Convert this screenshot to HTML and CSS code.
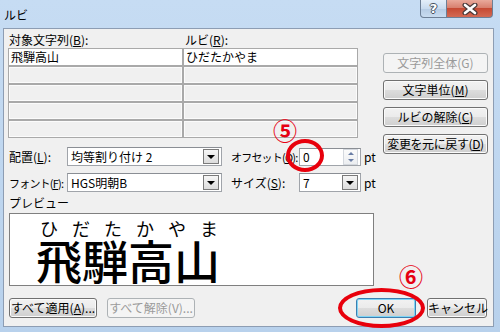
FILE: index.html
```html
<!DOCTYPE html>
<html lang="ja">

<head>
  <meta charset="UTF-8">
  <title>ルビ</title>
  <link rel="stylesheet" href="styles.css">
</head>

<body>
  <div class="rb_window">
    <div class="rb_titlebar">
      <span class="rb_title">ルビ</span>
      <div class="rb_caption">
        <div class="rb_cap_help">?</div>
        <div class="rb_cap_close">
          <svg width="16" height="12" viewBox="0 0 16 12">
            <path d="M3 2 L13 10 M13 2 L3 10" stroke="#4a3a3a" stroke-width="5" stroke-linecap="round" />
            <path d="M3 2 L13 10 M13 2 L3 10" stroke="#fff" stroke-width="2.6" stroke-linecap="round" />
          </svg>
        </div>
      </div>
    </div>

    <div class="rb_client">
      <div class="rb_main">
        <div class="rb_left">
          <div class="rb_grid_head">
            <span>対象文字列(<u>B</u>):</span>
            <span>ルビ(<u>R</u>):</span>
          </div>
          <div class="rb_grid">
            <div class="rb_cell rb_cell_on">飛騨高山</div>
            <div class="rb_cell rb_cell_on">ひだたかやま</div>
            <div class="rb_cell"></div>
            <div class="rb_cell"></div>
            <div class="rb_cell"></div>
            <div class="rb_cell"></div>
            <div class="rb_cell"></div>
            <div class="rb_cell"></div>
            <div class="rb_cell"></div>
            <div class="rb_cell"></div>
          </div>

          <div class="rb_form">
            <span class="rb_label">配置(<u>L</u>):</span>
            <div class="rb_combo"><span>均等割り付け 2</span><span class="rb_drop"></span></div>
            <span class="rb_label rb_label2 rb_kana">オフセット(<u>O</u>):</span>
            <div class="rb_combo rb_spin">
              <span>0</span>
              <span class="rb_spin_btns">
                <span class="rb_up"></span>
                <span class="rb_down"></span>
              </span>
            </div>
            <span class="rb_unit">pt</span>

            <span class="rb_label rb_kana">フォント(<u>F</u>):</span>
            <div class="rb_combo"><span>HGS明朝B</span><span class="rb_drop"></span></div>
            <span class="rb_label rb_label2">サイズ(<u>S</u>):</span>
            <div class="rb_combo"><span>7</span><span class="rb_drop"></span></div>
            <span class="rb_unit">pt</span>
          </div>

          <div class="rb_preview_label">プレビュー</div>
          <div class="rb_preview">
            <div class="rb_ruby_text">
              <span>ひ</span><span>だ</span><span>た</span><span>か</span><span>や</span><span>ま</span>
            </div>
            <div class="rb_base_text">飛騨高山</div>
          </div>
        </div>

        <div class="rb_side">
          <div class="rb_btn rb_disabled">文字列全体(G)</div>
          <div class="rb_btn">文字単位(<u>M</u>)</div>
          <div class="rb_btn">ルビの解除(<u>C</u>)</div>
          <div class="rb_btn rb_tight">変更を元に戻す(<u>D</u>)</div>
        </div>
      </div>

      <div class="rb_bottom">
        <div class="rb_btn rb_wide">すべて適用(<u>A</u>)...</div>
        <div class="rb_btn rb_wide rb_disabled">すべて解除(V)...</div>
        <div class="rb_spacer"></div>
        <div class="rb_btn rb_small rb_default">OK</div>
        <div class="rb_btn rb_small">キャンセル</div>
      </div>
    </div>
  </div>

  <!-- annotations drawn over the dialog -->
  <div class="rb_mark rb_mark5">⑤</div>
  <div class="rb_ring rb_ring_offset"></div>
  <div class="rb_mark rb_mark6">⑥</div>
  <div class="rb_ring rb_ring_ok"></div>
</body>

</html>
```

FILE: styles.css
```css
body {
  margin: 0;
  width: 500px;
  height: 332px;
  overflow: hidden;
  position: relative;
  background: linear-gradient(#c6dcf3, #b8d1ec);
  font-family: "Noto Sans CJK JP", sans-serif;
  font-size: 12px;
  color: #000;
}

u {
  text-decoration: underline;
  text-underline-offset: 1px;
}

.rb_titlebar {
  height: 28px;
  display: flex;
  align-items: flex-start;
}

.rb_title {
  padding: 7px 0 0 4px;
  font-size: 12px;
  line-height: 16px;
}

.rb_caption {
  margin-left: auto;
  margin-right: 7px;
  display: flex;
}

.rb_cap_help,
.rb_cap_close {
  height: 18px;
  box-sizing: border-box;
  border: 1px solid #6d7f96;
  border-top: none;
  display: flex;
  align-items: center;
  justify-content: center;
}

.rb_cap_help {
  width: 27px;
  border-radius: 0 0 0 4px;
  background: linear-gradient(#e4eef9, #c9dbef 50%, #b5cbe4 51%, #c9dcf0);
  color: #fff;
  font-family: "DejaVu Sans", sans-serif;
  font-weight: bold;
  font-size: 13px;
  line-height: 16px;
  text-shadow: 1px 0 #46505e, -1px 0 #46505e, 0 1px #46505e, 0 -1px #46505e;
}

.rb_cap_close {
  width: 46px;
  border-left: none;
  border-radius: 0 0 4px 0;
  background: linear-gradient(#e9a99b, #d8806f 45%, #c64a34 50%, #d36a54);
}

.rb_client {
  margin-left: 3px;
  width: 491px;
  height: 299px;
  box-sizing: border-box;
  border: 1px solid #8d9db3;
  background: #f0f0f0;
  padding: 4px 0 0 4px;
}

.rb_main {
  display: flex;
}

.rb_left {
  width: 366px;
}

.rb_grid_head {
  display: grid;
  grid-template-columns: 176px 174px;
  padding-left: 1px;
  height: 15px;
  line-height: 13px;
}

.rb_grid {
  width: 350px;
  display: grid;
  grid-template-columns: 173px 173px;
  grid-auto-rows: 16px;
  gap: 2px;
  padding: 1px;
  box-sizing: border-box;
  background: #a9a9a9;
}

.rb_cell {
  background: #f0f0f0;
  box-shadow: inset 0 0 0 1px #fbfbfb;
  padding-left: 2px;
  line-height: 16px;
}

.rb_cell_on {
  background: #fff;
  box-shadow: none;
}

.rb_form {
  margin-top: 9px;
  display: grid;
  grid-template-columns: 59px 155px 77px 62px auto;
  grid-auto-rows: 19px;
  row-gap: 7px;
  align-items: center;
}

.rb_label {
  padding-left: 1px;
  line-height: 16px;
  white-space: nowrap;
}

.rb_label2 {
  padding-left: 9px;
}

.rb_kana {
  font-size: 11px;
  letter-spacing: -0.8px;
}

.rb_unit {
  padding-left: 3px;
  line-height: 16px;
}

.rb_combo {
  height: 19px;
  box-sizing: border-box;
  border: 1px solid #a0a4aa;
  border-top-color: #8a8e94;
  background: #fff;
  display: flex;
  align-items: center;
  padding: 0 2px 0 3px;
  line-height: 16px;
}

.rb_drop {
  margin-left: auto;
  width: 16px;
  height: 15px;
  box-sizing: border-box;
  border: 1px solid #7a7a7a;
  background: linear-gradient(#f6f6f6, #dcdcdc);
  position: relative;
}

.rb_drop::after {
  content: "";
  position: absolute;
  left: 3px;
  top: 5px;
  border-left: 4px solid transparent;
  border-right: 4px solid transparent;
  border-top: 4px solid #000;
}

.rb_spin {
  height: 18px;
}

.rb_spin_btns {
  margin-left: auto;
  width: 15px;
  height: 16px;
  display: flex;
  flex-direction: column;
  align-items: center;
  justify-content: space-around;
  background: linear-gradient(#fbfbfb, #eceef1);
  border: 1px solid #d4d8de;
  box-sizing: border-box;
}

.rb_up {
  border-left: 3px solid transparent;
  border-right: 3px solid transparent;
  border-bottom: 3px solid #6a7ea6;
}

.rb_down {
  border-left: 3px solid transparent;
  border-right: 3px solid transparent;
  border-top: 3px solid #6a7ea6;
}

.rb_preview_label {
  height: 21px;
  line-height: 21px;
  padding-left: 1px;
}

.rb_preview {
  margin-left: 1px;
  width: 365px;
  height: 73px;
  box-sizing: border-box;
  border: 1px solid #7f7f7f;
  background: #fff;
  padding-left: 26px;
  overflow: hidden;
}

.rb_ruby_text {
  width: 192px;
  margin-left: -3px;
  display: flex;
  justify-content: space-around;
  margin-top: 5px;
  font-size: 18px;
  line-height: 18px;
}

.rb_base_text {
  font-size: 46px;
  line-height: 44px;
  font-weight: 500;
  white-space: nowrap;
}

.rb_side {
  margin-left: 9px;
  padding-top: 20px;
  width: 105px;
  display: flex;
  flex-direction: column;
  gap: 7px;
}

.rb_btn {
  height: 20px;
  box-sizing: border-box;
  border: 1px solid #707070;
  border-radius: 3px;
  background: linear-gradient(#f2f2f2, #ebebeb 50%, #dddddd 50%, #cfcfcf);
  box-shadow: inset 0 0 0 1px #fbfbfb;
  text-align: center;
  line-height: 17px;
  white-space: nowrap;
}

.rb_tight {
  letter-spacing: -0.4px;
}

.rb_disabled {
  border-color: #adb2b5;
  background: #f4f4f4;
  box-shadow: none;
  color: #9a9a9a;
}

.rb_default {
  border-color: #3c7fb1;
  box-shadow: inset 0 0 0 1px #7fd5f5;
}

.rb_bottom {
  margin-top: 12px;
  padding-left: 1px;
  padding-right: 6px;
  display: flex;
}

.rb_wide {
  width: 88px;
  margin-right: 10px;
}

.rb_spacer {
  flex: 1;
}

.rb_small {
  width: 60px;
  margin-left: 11px;
}

.rb_mark {
  position: absolute;
  color: #e60012;
  font-weight: 700;
  font-size: 24px;
  line-height: 24px;
}

.rb_mark5 {
  left: 273px;
  top: 118px;
}

.rb_mark6 {
  left: 399px;
  top: 264px;
}

.rb_ring {
  position: absolute;
  box-sizing: border-box;
  border: 4px solid #e8000c;
  border-radius: 50%;
}

.rb_ring_offset {
  left: 286px;
  top: 139px;
  width: 38px;
  height: 33px;
}

.rb_ring_ok {
  left: 338px;
  top: 288px;
  width: 87px;
  height: 40px;
}
```
